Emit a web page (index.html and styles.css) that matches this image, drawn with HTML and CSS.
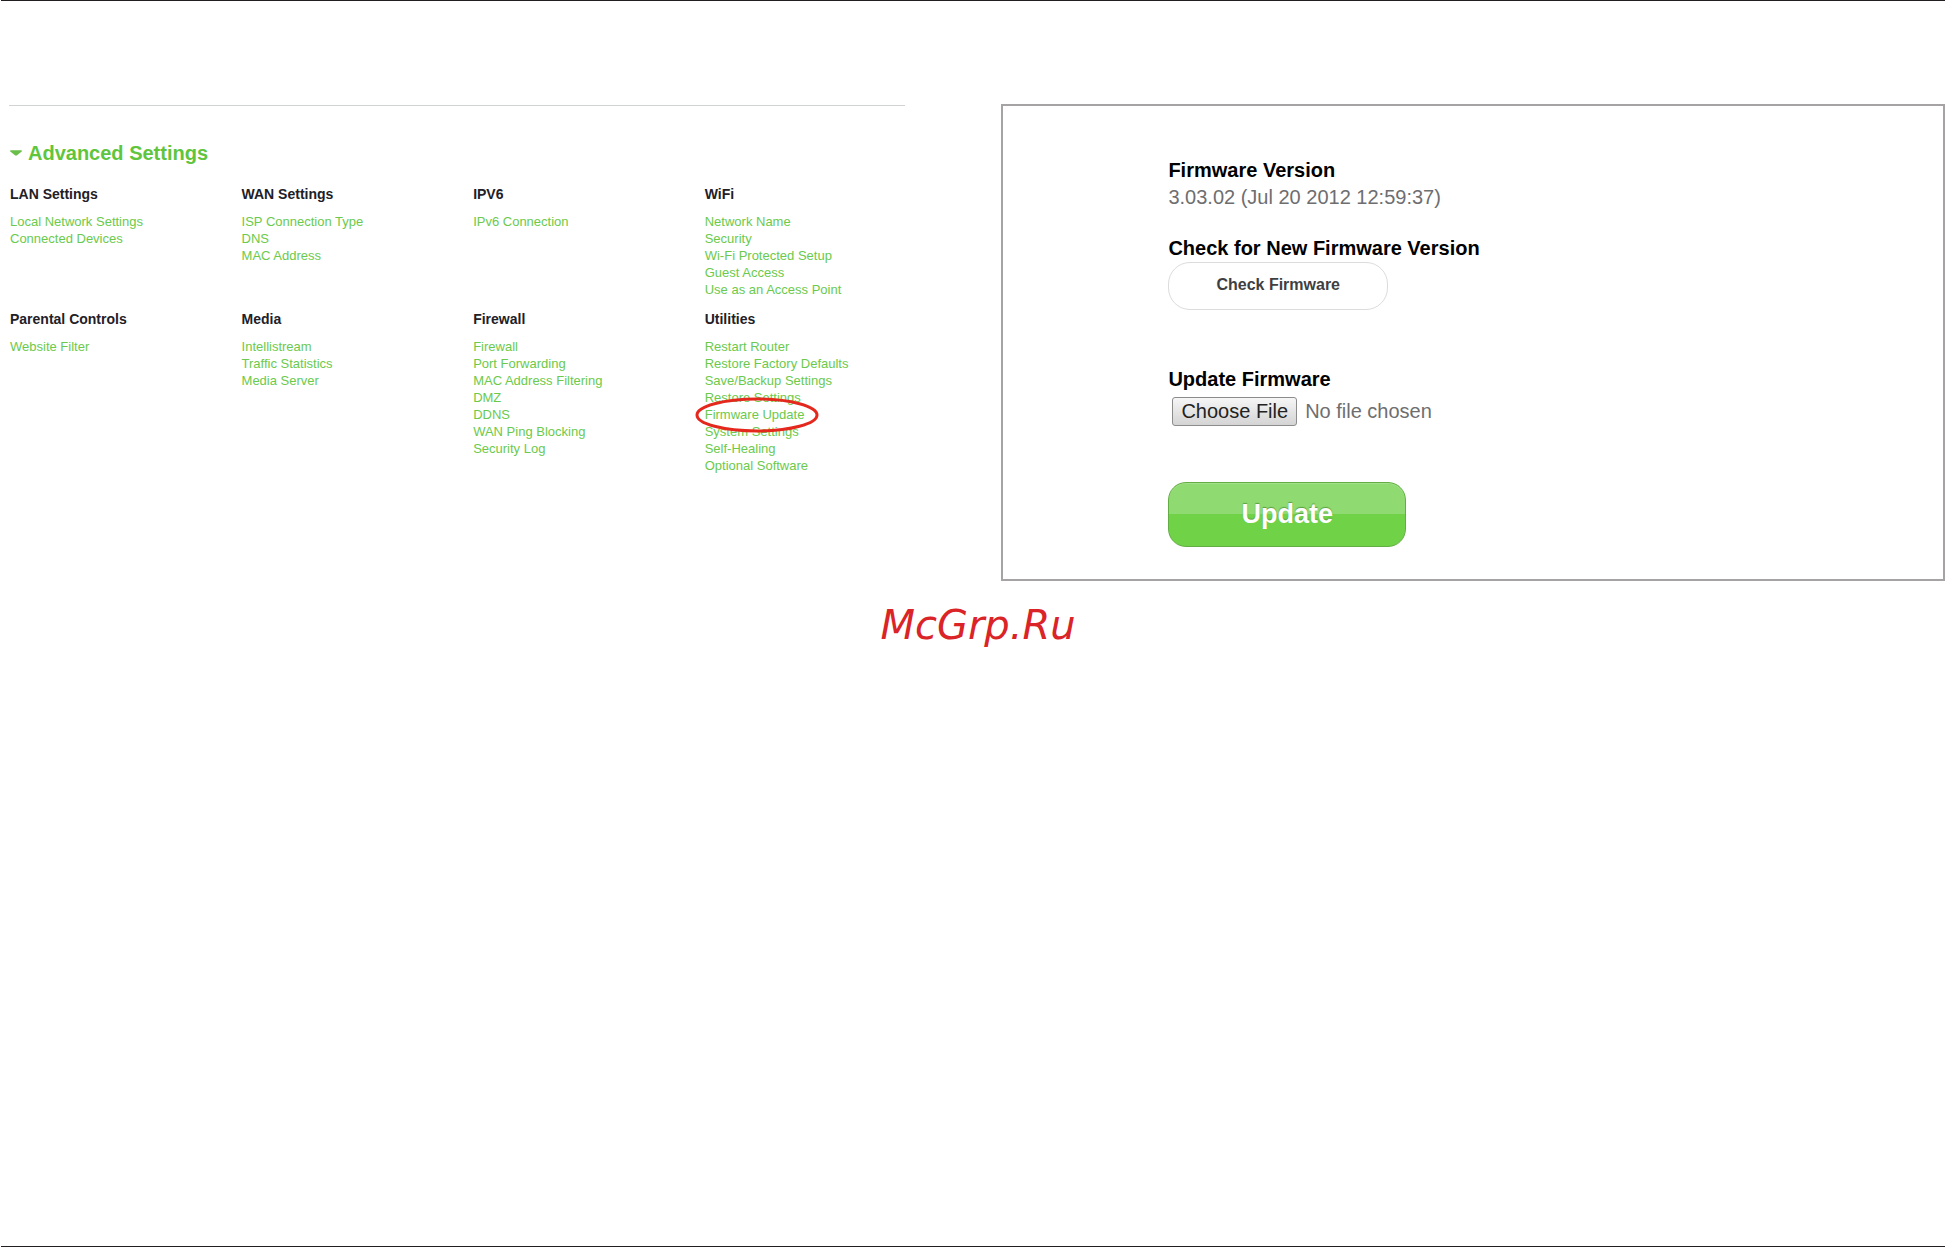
FILE: index.html
```html
<!DOCTYPE html>
<html lang="en">

<head>
    <meta charset="UTF-8">
    <meta name="viewport" content="width=device-width, initial-scale=1.0">
    <title>Firmware Update</title>
    <link rel="stylesheet" href="styles.css">
</head>

<body>
    <div class="page">
        <main class="columns">
            <nav class="settings">
                <h1 class="settings-title">
                    <svg class="arrow" viewBox="0 0 13 7" aria-hidden="true"><path d="M0 1 Q0 0 1 0 H12 Q13 0 13 1 L8 5 Q6.5 6.5 5 5 Z"/></svg>
                    Advanced Settings
                </h1>
                <div class="groups">
                    <section>
                        <h2>LAN Settings</h2>
                        <ul>
                            <li><a href="#">Local Network Settings</a></li>
                            <li><a href="#">Connected Devices</a></li>
                        </ul>
                    </section>
                    <section>
                        <h2>WAN Settings</h2>
                        <ul>
                            <li><a href="#">ISP Connection Type</a></li>
                            <li><a href="#">DNS</a></li>
                            <li><a href="#">MAC Address</a></li>
                        </ul>
                    </section>
                    <section>
                        <h2>IPV6</h2>
                        <ul>
                            <li><a href="#">IPv6 Connection</a></li>
                        </ul>
                    </section>
                    <section>
                        <h2>WiFi</h2>
                        <ul>
                            <li><a href="#">Network Name</a></li>
                            <li><a href="#">Security</a></li>
                            <li><a href="#">Wi-Fi Protected Setup</a></li>
                            <li><a href="#">Guest Access</a></li>
                            <li><a href="#">Use as an Access Point</a></li>
                        </ul>
                    </section>
                    <section>
                        <h2>Parental Controls</h2>
                        <ul>
                            <li><a href="#">Website Filter</a></li>
                        </ul>
                    </section>
                    <section>
                        <h2>Media</h2>
                        <ul>
                            <li><a href="#">Intellistream</a></li>
                            <li><a href="#">Traffic Statistics</a></li>
                            <li><a href="#">Media Server</a></li>
                        </ul>
                    </section>
                    <section>
                        <h2>Firewall</h2>
                        <ul>
                            <li><a href="#">Firewall</a></li>
                            <li><a href="#">Port Forwarding</a></li>
                            <li><a href="#">MAC Address Filtering</a></li>
                            <li><a href="#">DMZ</a></li>
                            <li><a href="#">DDNS</a></li>
                            <li><a href="#">WAN Ping Blocking</a></li>
                            <li><a href="#">Security Log</a></li>
                        </ul>
                    </section>
                    <section>
                        <h2>Utilities</h2>
                        <ul>
                            <li><a href="#">Restart Router</a></li>
                            <li><a href="#">Restore Factory Defaults</a></li>
                            <li><a href="#">Save/Backup Settings</a></li>
                            <li><a href="#">Restore Settings</a></li>
                            <li class="marked">
                                <a href="#">Firmware Update</a>
                                <svg class="ring" viewBox="0 0 124 36" aria-hidden="true"><ellipse cx="62" cy="18" rx="60" ry="16"/></svg>
                            </li>
                            <li><a href="#">System Settings</a></li>
                            <li><a href="#">Self-Healing</a></li>
                            <li><a href="#">Optional Software</a></li>
                        </ul>
                    </section>
                </div>
            </nav>

            <form class="firmware">
                <h2>Firmware Version</h2>
                <p class="version">3.03.02 (Jul 20 2012 12:59:37)</p>

                <h2 class="check-title">Check for New Firmware Version</h2>
                <button type="button" class="check-btn">Check Firmware</button>

                <label class="file-title" for="firmware-file">Update Firmware</label>
                <input type="file" class="file" id="firmware-file">

                <button type="submit" class="update-btn">Update</button>
            </form>
        </main>

        <footer>McGrp.Ru</footer>
    </div>
</body>

</html>
```
FILE: styles.css
```css
* {
    box-sizing: border-box;
}

body {
    margin: 0;
    padding-left: 1px;
    background-color: #fff;
    font-family: "Liberation Sans", Arial, sans-serif;
}

h1, h2, p, ul {
    margin: 0;
    padding: 0;
}

.page {
    min-height: 100vh;
    border-top: 1px solid #231f20;
    border-bottom: 1px solid #231f20;
}

.columns {
    display: grid;
    grid-template-columns: 19fr 20fr;
    gap: 96px;
    padding: 103px 0 0 8px;
}

/* left side: menu */
.settings {
    margin-top: 1px;
    padding: 35px 0 0 1px;
    border-top: 1px solid #d2d4d3;
}

.settings-title {
    display: flex;
    align-items: center;
    gap: 6px;
    margin-bottom: 19px;
    font-size: 20px;
    line-height: 24px;
    color: #5fc53d;
}

.arrow {
    width: 12px;
    height: 7px;
    fill: #6abf4b;
}

.groups {
    display: grid;
    grid-template-columns: 15fr 15fr 15fr 13fr;
    row-gap: 11px;
}

.groups h2 {
    margin-bottom: 9px;
    font-size: 14px;
    line-height: 20px;
    color: #222026;
}

.groups ul {
    list-style: none;
    font-size: 13px;
    line-height: 17px;
}

.groups a {
    color: #6bca4c;
    text-decoration: none;
}

.groups a:hover {
    text-decoration: underline;
}

.marked {
    position: relative;
}

.ring {
    position: absolute;
    top: -9px;
    left: -10px;
    width: 124px;
    height: 36px;
    fill: none;
    stroke: #e4281d;
    stroke-width: 3;
    pointer-events: none;
}

/* right side: firmware panel */
.firmware {
    display: flex;
    flex-direction: column;
    align-items: flex-start;
    padding: 51px 20px 32px 165px;
    border: 2px solid #a5a3a4;
    font-size: 20px;
    line-height: 27px;
    color: #6e6e70;
}

.firmware h2,
.file-title {
    font-size: 20px;
    font-weight: bold;
    color: #000;
}

.check-title {
    margin-top: 24px;
}

.check-btn {
    padding: 13px 47px 15px;
    border: 1px solid #dcdcdc;
    border-radius: 22px;
    background-color: #fff;
    font: bold 16px/18px "Liberation Sans", Arial, sans-serif;
    color: #3f3f42;
    cursor: pointer;
}

.file-title {
    margin-top: 56px;
}

.file {
    margin: 4px 0 0 4px;
    font: 20px/25px "Liberation Sans", Arial, sans-serif;
    color: #6e6e70;
}

.file::file-selector-button {
    height: 29px;
    margin: 0 8px 0 0;
    padding: 0 8px;
    border: 1px solid #8c8c8c;
    border-radius: 3px;
    background: linear-gradient(#f6f6f6, #d4d4d4);
    font: 20px/25px "Liberation Sans", Arial, sans-serif;
    color: #222;
}

.update-btn {
    margin-top: 56px;
    padding: 16px 72px 17px;
    border: 1px solid #62ae45;
    border-radius: 18px;
    background: linear-gradient(#8fda71 50%, #6fd247 50%);
    box-shadow: inset 0 1px 0 #a3e08a;
    font: bold 27px/30px "Liberation Sans", Arial, sans-serif;
    color: #fff;
    text-shadow: 0 -1px 1px #5b9f40;
    cursor: pointer;
}

footer {
    margin-top: 20px;
    padding-left: 10px;
    text-align: center;
    font: italic 40px/48px "DejaVu Sans", sans-serif;
    color: #da2427;
}
```
